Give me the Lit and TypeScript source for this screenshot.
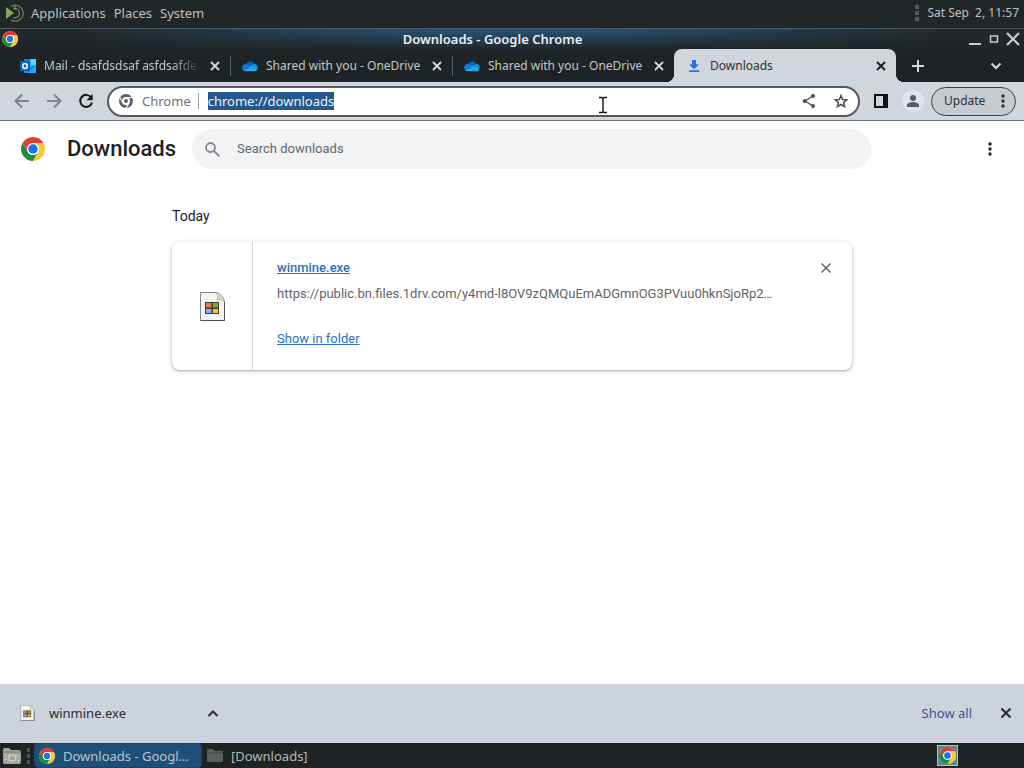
import { LitElement, html, css } from "lit";
import { customElement, property, query } from "lit/decorators.js";

const outlookIcon = html`<svg width="16" height="16" viewBox="0 0 16 16" aria-hidden="true">
  <rect x="4" y="1" width="12" height="14" rx="1" fill="#28a8ea" />
  <path d="M4 2q0-1 1-1h5.500v6H4z" fill="#0f78d4" /><path d="M10.500 1H15q1 0 1 1v5h-5.500z" fill="#50d9ff" />
  <path d="M4 10l12-2v6a1 1 0 0 1-1 1H5a1 1 0 0 1-1-1z" fill="#1490df" /><path d="M16 8v6a1 1 0 0 1-1 1H8z" fill="#28a8ea" />
  <rect x="0" y="3" width="10" height="10" rx="1" fill="#0a63b8" />
  <ellipse cx="5" cy="8" rx="2.200" ry="2.500" fill="none" stroke="#fff" stroke-width="1.500" />
</svg>`;

const oneDriveIcon = html`<svg width="16" height="16" viewBox="0 0 16 16" aria-hidden="true">
  <path d="M4 6.200A4.700 4.700 0 0 1 12.600 6L10 10z" fill="#0364b8" />
  <path d="M3.500 5.900C1.500 6 0 7.600 0 9.600c0 1.200.5 2.100 1.100 2.700L10 8.400 6.800 6.500a4 4 0 0 0-3.300-.6z" fill="#0f78d4" />
  <path d="M12.600 6A3.600 3.600 0 0 0 10 7.100L6.500 10l8.600 1.500c1.600-2.300.2-5.400-2.500-5.500z" fill="#1490df" />
  <path d="M1.100 12.300c.6.600 1.500 1 2.500 1h9c1.100 0 2-.6 2.600-1.600L10 8.400z" fill="#28a8ea" />
</svg>`;

const downloadIcon = html`<svg width="16" height="16" viewBox="0 0 16 16" aria-hidden="true">
  <path d="M6 2h4v4.500h3L8 11.200 3 6.500h3zM3 12.300h10V14H3z" fill="#2b6fe0" />
</svg>`;

const chromeLogo = (size: number) => html`<svg width=${size} height=${size} viewBox="0 0 48 48" aria-hidden="true">
  <circle cx="24" cy="24" r="23.500" fill="#fff" />
  <path d="M24 12h20.780A24 24 0 0 0 3.220 12l10.390 18A12 12 0 0 1 24 12z" fill="#e33b2e" />
  <path d="M34.390 30L24 48a24 24 0 0 0 20.780-36H24a12 12 0 0 1 10.390 18z" fill="#fcc934" />
  <path d="M13.610 30L3.220 12A24 24 0 0 0 24 48l10.390-18a12 12 0 0 1-20.780 0z" fill="#1e8e3e" />
  <circle cx="24" cy="24" r="12" fill="#fff" /><circle cx="24" cy="24" r="9.500" fill="#1a73e8" />
</svg>`;

const cross = (box: number, half: number, weight: number) => html`<svg width=${box} height=${box} viewBox="0 0 16 16" aria-hidden="true">
  <path d="M${8 - half} ${8 - half}L${8 + half} ${8 + half}M${8 + half} ${8 - half}L${8 - half} ${8 + half}" stroke="currentColor" stroke-width=${weight} />
</svg>`;

const dots = html`<svg width="16" height="16" viewBox="0 0 16 16" fill="currentColor" aria-hidden="true">
  <circle cx="8" cy="3" r="1.700" /><circle cx="8" cy="8" r="1.700" /><circle cx="8" cy="13" r="1.700" />
</svg>`;

const grip = html`<svg width="4" height="16" viewBox="0 0 4 16" fill="#55595b" aria-hidden="true">
  <rect width="4" height="4" /><rect y="6" width="4" height="4" /><rect y="12" width="4" height="4" />
</svg>`;

const exeIcon = (w: number, h: number) => html`<svg width=${w} height=${h} viewBox="0 0 25 29" aria-hidden="true">
  <path d="M.5.500H16Q23 2 24.500 10v18.500H.5z" fill="#f4f4f2" stroke="#85868a" />
  <path d="M16 .5c2 2.500 2 5 1 7.500 2.500-.8 5.500-.3 7.500 2Q23 2 16 .5z" fill="#d8d9d8" stroke="#a5a6a6" stroke-width=".6" />
  <path d="M.5 28.500h24V10" fill="none" stroke="#4d4f52" />
  <rect x="5" y="10" width="14" height="12" fill="#4a3c22" />
  <rect x="6" y="11" width="5.500" height="4.500" fill="#f0794a" /><rect x="13" y="11" width="5" height="4.500" fill="#6fae4b" />
  <rect x="6" y="17" width="5.500" height="4" fill="#86adf3" /><rect x="13" y="17" width="5" height="4" fill="#fcc63a" />
</svg>`;

const controls = css`
  * { box-sizing: border-box; }
  svg { display: block; flex: none; }
  button {
    display: flex; align-items: center; justify-content: center; flex: none;
    margin: 0; padding: 0; border: 0; background: none; color: inherit; font: inherit;
  }
  input { min-width: 0; margin: 0; padding: 0; border: 0; outline: 0; background: none; font: inherit; }
`;

@customElement("browser-tab")
class BrowserTab extends LitElement {
  @property() label = "";
  @property({ type: Boolean }) active = false;
  @property({ type: Boolean }) divided = false;
  @property({ type: Boolean }) faded = false;
  @property({ attribute: false }) icon: unknown = null;

  static styles = [controls, css`
    :host { display: block; flex: 0 1 222px; min-width: 0; font-size: 12px; }
    .tab {
      position: relative; display: flex; align-items: center;
      height: 33px; padding: 0 7px 0 12px; color: #c3c7c9;
    }
    .label { flex: 1; min-width: 0; margin-left: 8px; overflow: hidden; white-space: nowrap; line-height: 20px; }
    .faded { mask-image: linear-gradient(to right, #000 calc(100% - 36px), transparent calc(100% - 6px)); }
    .close { width: 16px; height: 16px; color: #d6d9db; }
    .divided::after { content: ""; position: absolute; right: -1px; top: 7px; width: 1px; height: 20px; background: #5a5f62; }
    .active { background: #d0d6dc; color: #2d3236; border-radius: 8px 8px 0 0; }
    .active .close { color: #15191c; }
    .active::before, .active::after {
      content: ""; position: absolute; bottom: 0; width: 8px; height: 8px;
      background: radial-gradient(circle at 0 0, transparent 8px, #d0d6dc 8px);
    }
    .active::before { left: -8px; }
    .active::after { right: -8px; background: radial-gradient(circle at 100% 0, transparent 8px, #d0d6dc 8px); }
  `];

  render() {
    return html`<div class="tab ${this.active ? "active" : ""} ${this.divided ? "divided" : ""}">
      ${this.icon}<span class="label ${this.faded ? "faded" : ""}">${this.label}</span>
      <button class="close" aria-label="Close tab">${cross(16, 4, 1.8)}</button>
    </div>`;
  }
}

@customElement("download-card")
class DownloadCard extends LitElement {
  static styles = [controls, css`
    :host { display: block; }
    .card {
      display: flex; min-height: 128px; border-radius: 8px; background: #fff;
      box-shadow: 0 1px 2px rgba(60, 64, 67, .3), 0 1px 4px 1px rgba(60, 64, 67, .16);
    }
    .picture { display: flex; align-items: center; justify-content: center; width: 81px; flex: none; border-right: 1px solid #d2d3d5; }
    .details { flex: 1; min-width: 0; padding: 16px 0 16px 24px; line-height: 20px; }
    .row { display: flex; justify-content: space-between; align-items: center; padding-right: 18px; }
    .details a { color: #2a6fc9; text-decoration: underline; }
    .name { font-weight: 500; }
    .url { margin: 6px 0 25px; padding-right: 72px; color: #5f6368; white-space: nowrap; overflow: hidden; text-overflow: ellipsis; }
    .remove { width: 16px; height: 16px; color: #5a5e63; }
  `];

  render() {
    return html`<article class="card">
      <div class="picture">${exeIcon(25, 29)}</div>
      <div class="details">
        <div class="row"><a class="name" href="#">winmine.exe</a>
          <button class="remove" aria-label="Remove from list">${cross(16, 4.5, 1.4)}</button></div>
        <div class="url">https://public.bn.files.1drv.com/y4md-l8OV9zQMQuEmADGmnOG3PVuu0hknSjoRp2…</div>
        <a href="#">Show in folder</a>
      </div>
    </article>`;
  }
}

@customElement("app-root")
class AppRoot extends LitElement {
  @query(".address") address!: HTMLInputElement;

  static styles = [controls, css`
    :host {
      position: relative; display: flex; flex-direction: column; min-height: 100vh; overflow: hidden;
      background: #fff; font: 13px/20px "Noto Sans", "Open Sans", sans-serif;
    }
    .panel { display: flex; align-items: center; gap: 8px; height: 28px; padding: 0 5px 2px; background: #212628; color: #bfc1c1; }
    .panel .mark { margin-right: -1px; }
    .panel .clock { margin-left: auto; display: flex; align-items: center; gap: 8px; white-space: pre; font-size: 12px; }
    .titlebar {
      display: flex; align-items: center; height: 22px; padding: 0 3px 2px 2px;
      border-top: 1px solid #4b5a63; color: #e8eef2; font-weight: 600;
      background: linear-gradient(to bottom, transparent, #1f2527), linear-gradient(to right, #24292b 8%, #275478 42%, #275478 58%, #24292b 92%);
    }
    .caption { flex: 1; text-align: center; }
    .window-buttons { display: flex; justify-content: flex-end; gap: 3px; color: #c9cccd; }
    .tabs { display: flex; align-items: flex-end; height: 32px; padding: 0 20px 0 8px; background: #1e2426; color: #d5d9db; }
    .new-tab { width: 28px; height: 32px; margin-left: 8px; }
    .tab-search { width: 16px; height: 32px; margin-left: auto; }
    .toolbar {
      display: flex; align-items: center; height: 39px; padding: 0 8px 0 6px; background: #d0d6dc;
      border-bottom: 1px solid #6b6f74; color: #2f3336;
    }
    .nav { width: 32px; height: 28px; color: #7d8388; }
    .reload { color: #15191c; }
    .omnibox {
      display: flex; align-items: center; flex: 1; min-width: 0; height: 31px; margin-left: 5px; padding: 0 7px 0 9px;
      border: 2px solid #565a5e; border-radius: 16px; background: #fff; color: #4b5055;
    }
    .scheme { margin-left: 8px; padding-right: 7px; color: #6d7175; }
    .divider { width: 1px; height: 16px; margin-right: 9px; background: #9a9ea2; }
    .address { flex: 1; height: 18px; line-height: 18px; color: #202427; }
    .address::selection { background: #26598a; color: #e8f2fa; }
    .omnibox button { width: 20px; height: 20px; margin-left: 12px; }
    .side { width: 20px; height: 20px; margin-left: 11px; color: #0d1114; }
    .avatar { width: 22px; height: 22px; margin-left: 11px; border-radius: 50%; background: #dfe3ef; }
    .update { justify-content: space-between; width: 85px; height: 29px; margin-left: 7px; padding: 0 4px 0 12px; border: 1px solid #3c4043; border-radius: 15px; background: #c6cad1; font-size: 12px; }
    .page { flex: 1; background: #fff; font: 13px/20px Roboto, sans-serif; color: #202124; }
    .header { display: flex; align-items: center; height: 56px; padding: 0 26px 0 21px; }
    h1 { margin: 0 16px 0 22px; font-size: 22px; line-height: 28px; font-weight: 500; }
    .search { display: flex; align-items: center; gap: 17px; flex: 0 1 679px; min-width: 0; height: 40px; padding: 0 13px; border-radius: 20px; background: #f1f3f4; }
    .search input { flex: 1; color: #202124; }
    .search input::placeholder { color: #64686c; opacity: 1; }
    .more { width: 16px; height: 24px; margin-left: auto; }
    .list { max-width: 680px; margin: 0 auto; padding-top: 29px; }
    h2 { margin: 0 0 16px; font-size: 14px; line-height: 20px; font-weight: 400; }
    .shelf { display: flex; align-items: center; height: 59px; padding: 0 10px 2px 20px; background: #ccd3dc; color: #2a2f33; }
    .item { justify-content: flex-start; gap: 14px; width: 185px; }
    .show-all { margin-left: auto; margin-right: 26px; color: #3a549c; text-decoration: none; }
    .taskbar { display: flex; align-items: center; height: 25px; padding-left: 2px; background: #1e2426; color: #b5b8b9; }
    .task { height: 25px; gap: 8px; padding: 0 5px; }
    .current { justify-content: flex-start; width: 168px; margin-left: 4px; padding: 0 4px; border: 1px solid #1c4364; border-radius: 4px; background: #1f4f78; color: #b9c5cf; }
    .tray { margin: 0 66px 0 auto; padding: 1px; border: 1px solid #a9c4cf; background: #5d8a88; }
    .pointer { position: absolute; left: 598px; top: 96px; }
  `];

  firstUpdated() {
    this.address.focus();
    this.address.select();
  }

  render() {
    return html`
      <nav class="panel">
        <svg class="mark" width="19" height="20" viewBox="0 0 19 20" fill="none" aria-hidden="true">
          <path d="M1 4v12l8-6z" fill="#87a556" />
          <g stroke="#78875a" stroke-width="1.200"><path d="M6 3.500A8 8 0 1 1 6 17" /><path d="M10 1.500V7M8 5.500A4.800 4.800 0 1 1 8 14.500" /></g>
        </svg>
        <button>Applications</button><button>Places</button><button>System</button>
        <span class="clock">${grip}<time>Sat Sep  2, 11:57</time></span>
      </nav>
      <header class="titlebar">
        ${chromeLogo(16)}<span class="caption">Downloads - Google Chrome</span>
        <div class="window-buttons">
          <button aria-label="Minimize"><svg width="16" height="16" viewBox="0 0 16 16"><path d="M2 13h12" stroke="currentColor" stroke-width="2" /></svg></button>
          <button aria-label="Maximize"><svg width="16" height="16" viewBox="0 0 16 16"><path d="M4.500 5h7v6h-7z" fill="none" stroke="currentColor" stroke-width="1.500" /></svg></button>
          <button aria-label="Close">${cross(16, 6, 2.2)}</button>
        </div>
      </header>
      <div class="tabs">
        <browser-tab label="Mail - dsafdsdsaf asfdsafde" .icon=${outlookIcon} divided faded></browser-tab>
        <browser-tab label="Shared with you - OneDrive" .icon=${oneDriveIcon} divided></browser-tab>
        <browser-tab label="Shared with you - OneDrive" .icon=${oneDriveIcon}></browser-tab>
        <browser-tab label="Downloads" .icon=${downloadIcon} active></browser-tab>
        <button class="new-tab" aria-label="New tab"><svg width="16" height="16" viewBox="0 0 16 16"><path d="M8 2v12M2 8h12" stroke="currentColor" stroke-width="2" /></svg></button>
        <button class="tab-search" aria-label="Search tabs"><svg width="16" height="16" viewBox="0 0 16 16"><path d="M3.500 5.500L8 10l4.500-4.500" fill="none" stroke="currentColor" stroke-width="2" /></svg></button>
      </div>
      <div class="toolbar">
        <button class="nav" aria-label="Back"><svg width="16" height="16" viewBox="0 0 16 16" fill="none" stroke="currentColor" stroke-width="2"><path d="M15 8H2M8 1.500L1.500 8 8 14.500" /></svg></button>
        <button class="nav" aria-label="Forward"><svg width="16" height="16" viewBox="0 0 16 16" fill="none" stroke="currentColor" stroke-width="2"><path d="M1 8h13M8 1.500L14.500 8 8 14.500" /></svg></button>
        <button class="nav reload" aria-label="Reload"><svg width="16" height="16" viewBox="0 0 16 16"><path d="M13.200 4.500A6 6 0 1 0 14 9.500" fill="none" stroke="currentColor" stroke-width="2" /><path d="M14.700 1v6.200H8.500z" fill="currentColor" /></svg></button>
        <div class="omnibox">
          <svg width="16" height="16" viewBox="0 0 16 16" fill="none" stroke="#5b6065"><circle cx="8" cy="8" r="5.500" stroke-width="3" /><circle cx="8" cy="8" r="2" fill="#5b6065" stroke="none" /><path d="M8 4.500h6.500M5 9.800L1.500 4M11 9.800l-3.500 6" stroke="#fff" stroke-width="1.100" /></svg>
          <label class="scheme" for="address">Chrome</label><span class="divider"></span>
          <input class="address" id="address" value="chrome://downloads" spellcheck="false" />
          <button aria-label="Share"><svg width="16" height="16" viewBox="0 0 16 16" fill="currentColor"><path d="M12 3L4 8l8 5" fill="none" stroke="currentColor" stroke-width="1.400" /><circle cx="12" cy="3" r="2" /><circle cx="3.700" cy="8" r="2" /><circle cx="12" cy="13" r="2" /></svg></button>
          <button aria-label="Bookmark this page"><svg width="16" height="16" viewBox="0 0 16 16"><path d="M8 2.600l1.600 3.900 4.200.4-3.200 2.700 1 4.100L8 11.500l-3.600 2.200 1-4.100-3.200-2.700 4.200-.4z" fill="none" stroke="currentColor" stroke-width="1.500" /></svg></button>
        </div>
        <button class="side" aria-label="Side panel"><svg width="14" height="14" viewBox="0 0 14 14"><path d="M0 0h14v14H0zM2 2v10h7V2z" fill="currentColor" fill-rule="evenodd" /></svg></button>
        <button class="avatar" aria-label="Profile"><svg width="14" height="14" viewBox="0 0 14 14" fill="#565b66"><circle cx="7" cy="4" r="3" /><path d="M1 13v-2c0-2 4-3 6-3s6 1 6 3v2z" /></svg></button>
        <button class="update">Update ${dots}</button>
      </div>
      <main class="page">
        <div class="header">
          ${chromeLogo(24)}<h1>Downloads</h1>
          <label class="search">
            <svg width="15" height="15" viewBox="0 0 15 15" fill="none" stroke="#84888c" stroke-width="1.800"><circle cx="5.500" cy="5.500" r="4.500" /><path d="M9 9l5.300 5.300" /></svg>
            <input type="text" placeholder="Search downloads" aria-label="Search downloads" />
          </label>
          <button class="more" aria-label="More actions">${dots}</button>
        </div>
        <section class="list"><h2>Today</h2><download-card></download-card></section>
      </main>
      <footer class="shelf">
        <button class="item">${exeIcon(15, 16)}<span>winmine.exe</span></button>
        <button aria-label="Download options"><svg width="16" height="16" viewBox="0 0 16 16"><path d="M3.500 11L8 6.500l4.500 4.500" fill="none" stroke="currentColor" stroke-width="2" /></svg></button>
        <a class="show-all" href="#">Show all</a>
        <button aria-label="Close">${cross(16, 4.5, 2.2)}</button>
      </footer>
      <nav class="taskbar">
        <button aria-label="Show desktop"><svg width="20" height="18" viewBox="0 0 20 18"><path d="M1 3q0-2 2-2h4l2 2h8q2 0 2 2v10q0 2-2 2H3q-2 0-2-2z" fill="#a4a596" /><path d="M1 5h18" stroke="#77796f" /><path d="M7 8h4q3 0 3 3t-3 3H7zM3 8l2 2M3 13l2-1M17 8l-2 1M17 14l-2-1" fill="none" stroke="#deded2" /></svg></button>
        <svg width="8" height="18" viewBox="0 0 8 18" fill="#4d5254"><rect x="5" y="1" width="3" height="4" /><rect x="5" y="7" width="3" height="4" /><rect x="5" y="13" width="3" height="4" /></svg>
        <button class="task current">${chromeLogo(16)}<span>Downloads - Googl…</span></button>
        <button class="task"><svg width="16" height="15" viewBox="0 0 16 15"><path d="M0 2q0-1 1-1h5l2 2h7q1 0 1 1v9q0 1-1 1H1q-1 0-1-1z" fill="#5c5e5e" /><path d="M0 5h16" stroke="#434646" /></svg>[Downloads]</button>
        <span class="tray">${chromeLogo(17)}</span>
      </nav>
      <svg class="pointer" width="10" height="18" viewBox="0 0 10 18" aria-hidden="true">
        <path d="M1.500 2Q4 1.500 5 3q1-1.500 3.500-1M5 3v12M1.500 16Q4 16.500 5 15q1 1.500 3.500 1" fill="none" stroke="#fff" stroke-width="3" />
        <path d="M1 1.500h3l1 1 1-1h3M5 2.500v13M1 16.500h3l1-1 1 1h3" fill="none" stroke="#111" stroke-width="1.400" />
      </svg>`;
  }
}
